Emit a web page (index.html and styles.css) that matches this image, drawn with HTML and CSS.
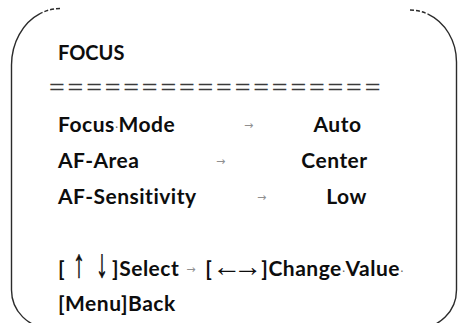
FILE: index.html
```html
<!DOCTYPE html>
<html>
<head>
    <meta charset="utf-8">
    <title>FOCUS menu</title>
    <link rel="stylesheet" href="styles.css">
</head>
<body>
    <div class="sheet">
        <!-- frame round the menu, top edge mostly missing -->
        <svg class="frame" width="458" height="323" viewBox="0 0 458 323">
            <path class="edge" d="M40 13.7 A48 56.5 0 0 0 11.5 65 L11.5 290 A38 38 0 0 0 49.5 328 L418 328 A38 38 0 0 0 456.5 290 L456.5 62 A46.5 52 0 0 0 428 14.1"/>
            <path class="edge dash" d="M60 8.5 A48 56.5 0 0 0 40 13.7 M410 10 A46.5 52 0 0 1 428 14.1"/>
        </svg>

        <div class="menu">
            <div class="line title">FOCUS</div>
            <div class="line rule"><span>==================</span></div>
            <div class="line row mode">
                <span class="key">Focus<span class="sp">·</span>Mode</span><span class="tab">→</span><span class="val">Auto</span>
            </div>
            <div class="line row area">
                <span class="key">AF-Area</span><span class="tab">→</span><span class="val">Center</span>
            </div>
            <div class="line row sens">
                <span class="key">AF-Sensitivity</span><span class="tab">→</span><span class="val">Low</span>
            </div>
            <div class="line"></div>
            <div class="line help">
                <span>[</span><span class="vk up"><span>&#x2191;&#xFE0E;</span></span><span class="vk down"><span>&#x2193;&#xFE0E;</span></span><span>]Select</span><span class="tab">→</span><span>[<span class="hk">←→</span>]Change<span class="sp">·</span>Value</span><span class="sp">·</span>
            </div>
            <div class="line">[Menu]Back</div>
        </div>
    </div>
</body>
</html>
```

FILE: styles.css
```css
html {
    background: #fff;
}
body {
    margin: 0;
}

.sheet {
    position: relative;
    width: 458px;
    height: 323px;
    overflow: hidden;
    background: #fff;
}

.frame {
    position: absolute;
    left: 0;
    top: 0;
}
.edge {
    fill: none;
    stroke: #2b2b2b;
    stroke-width: 1.4;
}
.dash {
    stroke-dasharray: 4 2;
}

.menu {
    padding: 35px 0 0 58px;
    font-family: Lato, "Open Sans", sans-serif;
    font-weight: 700;
    font-size: 21px;
    letter-spacing: 0.5px;
    color: #0d0d0d;
}

.line {
    height: 35.7px;
    line-height: 35.7px;
    white-space: nowrap;
}

.title {
    font-size: 20px;
    letter-spacing: 0;
}

.rule {
    margin-left: -9px;
    font-family: "Liberation Sans", sans-serif;
    font-weight: 400;
    font-size: 27px;
    letter-spacing: 2.8px;
    color: #3a3a3a;
}
.rule span {
    display: inline-block;
    transform: scaleY(0.72);
    transform-origin: 0 17px;
}

.row .key,
.row .val {
    display: inline-block;
}
.row .val {
    text-align: center;
}
.mode .key { width: 186px; }
.mode .val { width: 169px; }
.area .key { width: 158px; }
.area .val { width: 219px; }
.sens .key { width: 199px; }
.sens .val { width: 161px; }

.tab {
    display: inline-block;
    width: 9px;
    font-family: "DejaVu Sans", sans-serif;
    font-weight: 400;
    font-size: 11px;
    letter-spacing: 0;
    color: #8f8f8f;
    vertical-align: 3px;
    line-height: 1;
}

.sp {
    font-family: "DejaVu Sans", sans-serif;
    font-weight: 400;
    font-size: 12px;
    letter-spacing: 0;
    color: #666;
}

.help .tab {
    margin: 0 10px 0 7px;
}
.vk {
    display: inline-block;
    text-align: center;
    font-family: "Liberation Sans", sans-serif;
    font-weight: 400;
    font-size: 40px;
    line-height: 20px;
    letter-spacing: 0;
    vertical-align: -1px;
    color: #0d0d0d;
}
.vk span {
    display: inline-block;
    transform: scaleX(0.6);
    -webkit-text-stroke: 0.6px #0d0d0d;
}
.up {
    width: 27px;
}
.down {
    width: 20px;
}
.hk {
    font-family: "Liberation Sans", sans-serif;
    font-weight: 400;
    font-size: 29px;
    letter-spacing: -8px;
    margin-right: 7px;
}
```
